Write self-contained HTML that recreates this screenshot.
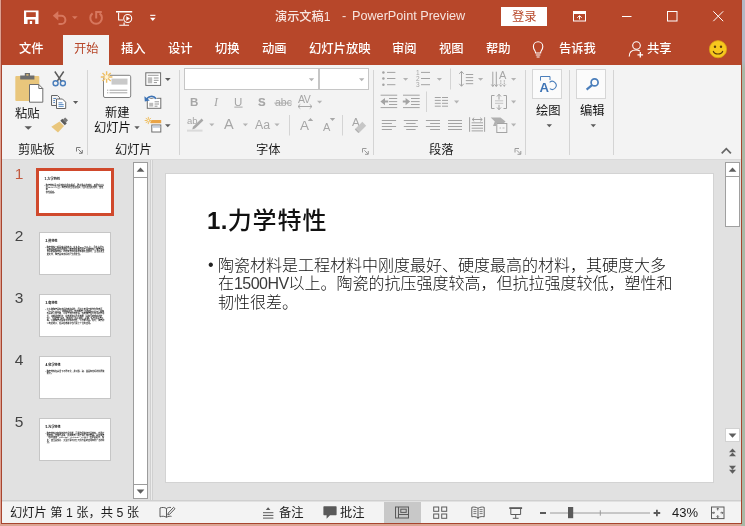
<!DOCTYPE html>
<html lang="zh-CN">
<head>
<meta charset="utf-8">
<title>演示文稿1 - PowerPoint Preview</title>
<style>
html,body{margin:0;padding:0;}
body{width:745px;height:526px;overflow:hidden;position:relative;background:linear-gradient(to bottom,#b4b8c6 0,#b4b8c6 60px,#aab8a6 70px,#aab8a6 100%);
 font-family:"Liberation Sans","Noto Sans CJK SC",sans-serif;font-size:12.3px;color:#141414;}
#win{position:absolute;left:0;top:0;width:742px;height:524px;background:#e1e1e1;overflow:hidden;}
.abs{position:absolute;}
.t,.num,.mini,.bodytxt{will-change:transform;}
.t{position:absolute;white-space:nowrap;line-height:16px;height:16px;}
#titlebar{left:0;top:0;width:742px;height:65px;background:#b7472a;}
.tab{color:#fff;top:41.4px;font-weight:500;}
#ribbon{left:2px;top:65px;width:739px;height:94px;background:#f3f3f3;}
.gl{top:141.7px;color:#1c1c1c;}
.fg{color:#a6a6a6;}
.sep{position:absolute;width:1px;background:#d4d4d4;top:70px;height:85px;}
#status{left:2px;top:502px;width:739px;height:21px;background:#f3f3f3;}
.st{top:505px;color:#1c1c1c;}
.thumb{position:absolute;left:38.5px;width:72.5px;height:43px;background:#fff;border:1px solid #c6c6c6;box-sizing:border-box;overflow:hidden;}
.thumb.sel{left:36px;width:78px;height:48px;border:3px solid #d0492c;}
.mini{position:absolute;left:0;top:2px;width:548px;height:309px;transform-origin:0 0;transform:scale(0.1287);}
.thumb.sel .mini{transform:scale(0.1302);left:0.4px;top:2px;}
.mt{position:absolute;left:43px;top:33px;font-size:24px;font-weight:700;letter-spacing:0.9px;line-height:30px;white-space:nowrap;color:#000;}
.mbul{position:absolute;left:43px;top:83.5px;font-size:16px;line-height:17.5px;color:#000;}
.mb{position:absolute;left:52.5px;top:83.6px;width:452px;font-size:16px;line-height:18.4px;color:#000;font-weight:500;}
.num{position:absolute;font-size:15.5px;color:#444;line-height:16px;width:20px;text-align:center;left:9px;}
</style>
</head>
<body>
<div id="win">
<!-- title + tabs -->
<div id="titlebar" class="abs"></div>
<div class="abs" style="left:63px;top:35px;width:46px;height:31px;background:#f3f3f3;"></div>
<div class="t" style="left:275px;top:8.6px;font-size:12.2px;font-weight:500;color:#f7e4de;">演示文稿1</div><div class="t" style="left:341.5px;top:8.4px;font-size:12.7px;color:#f7e4de;">-</div><div class="t" style="left:352px;top:8.4px;font-size:12.7px;letter-spacing:-0.02px;color:#f7e4de;">PowerPoint Preview</div>
<div class="abs" style="left:500.6px;top:7px;width:46.4px;height:18.8px;background:#fff;"></div>
<div class="t" style="left:511.6px;top:9.2px;font-size:12.3px;color:#b7472a;">登录</div>

<div class="t tab" style="left:18.5px;">文件</div>
<div class="t tab" style="left:73.5px;color:#b7472a;font-weight:400;">开始</div>
<div class="t tab" style="left:120.5px;">插入</div>
<div class="t tab" style="left:167.5px;">设计</div>
<div class="t tab" style="left:214.5px;">切换</div>
<div class="t tab" style="left:261.5px;">动画</div>
<div class="t tab" style="left:308.5px;">幻灯片放映</div>
<div class="t tab" style="left:392px;">审阅</div>
<div class="t tab" style="left:438.5px;">视图</div>
<div class="t tab" style="left:486px;">帮助</div>
<div class="t tab" style="left:558.5px;">告诉我</div>
<div class="t tab" style="left:647px;">共享</div>

<!-- ribbon -->
<div id="ribbon" class="abs"></div>
<div class="sep" style="left:87px;"></div>
<div class="sep" style="left:179px;"></div>
<div class="sep" style="left:373px;"></div>
<div class="sep" style="left:525px;"></div>
<div class="sep" style="left:569px;"></div>
<div class="sep" style="left:613px;"></div>
<div class="t" style="left:14.8px;top:105.6px;">粘贴</div>
<div class="t" style="left:105px;top:104.5px;">新建</div>
<div class="t" style="left:93.6px;top:120px;">幻灯片</div>
<div class="t" style="left:535.5px;top:102.5px;">绘图</div>
<div class="t" style="left:579.5px;top:102.5px;">编辑</div>
<div class="t gl" style="left:17.6px;">剪贴板</div>
<div class="t gl" style="left:114.8px;">幻灯片</div>
<div class="t gl" style="left:256px;">字体</div>
<div class="t gl" style="left:429px;">段落</div>

<!-- font group glyph buttons -->
<div class="t fg" style="left:190.3px;top:93.7px;font-weight:bold;font-size:11.5px;">B</div>
<div class="t fg" style="left:213.6px;top:93.7px;font-style:italic;font-size:12px;font-family:'Liberation Serif',serif;">I</div>
<div class="t fg" style="left:234.3px;top:93.7px;font-size:11.5px;">U</div>
<div class="t fg" style="left:258.3px;top:94.3px;font-weight:bold;font-size:11.5px;color:#dcdcdc;">S</div>
<div class="t fg" style="left:257.5px;top:93.7px;font-weight:bold;font-size:11.5px;">S</div>
<div class="t fg" style="left:275px;top:94px;font-size:10.5px;">abc</div>
<div class="t fg" style="left:297.5px;top:90.8px;font-size:10.5px;letter-spacing:-0.4px;">AV</div>
<div class="t fg" style="left:187px;top:112.5px;font-size:9.5px;">ab</div>
<div class="t fg" style="left:224.2px;top:116.4px;font-size:14.5px;">A</div>
<div class="t fg" style="left:255.3px;top:116.6px;font-size:12.3px;">Aa</div>
<div class="t fg" style="left:300.2px;top:118px;font-size:13.5px;">A</div>
<div class="t fg" style="left:322.8px;top:119.3px;font-size:11px;">A</div>
<div class="t fg" style="left:351.6px;top:114px;font-size:11.5px;">A</div>

<div class="t fg" style="left:415.8px;top:70px;font-size:6.5px;line-height:6.15px;height:auto;white-space:pre;">1
2
3</div>
<div class="t fg" style="left:498.6px;top:67.1px;font-size:11px;">A</div>
<!-- combo boxes -->
<div class="abs" style="left:184px;top:68px;width:135px;height:22px;background:#fff;border:1px solid #c6c6c6;box-sizing:border-box;"></div>
<div class="abs" style="left:319px;top:68px;width:50px;height:22px;background:#fff;border:1px solid #c6c6c6;box-sizing:border-box;"></div>
<div class="abs" style="left:532px;top:69px;width:30px;height:30px;background:#fbfbfb;border:1px solid #d6d6d6;box-sizing:border-box;"></div>
<div class="abs" style="left:576px;top:69px;width:30px;height:30px;background:#fbfbfb;border:1px solid #d6d6d6;box-sizing:border-box;"></div>

<!-- workspace -->
<div class="abs" style="left:2px;top:159px;width:739px;height:1px;background:#dadada;"></div>
<!-- thumbnails -->
<div class="num" style="top:166px;color:#c25a40;">1</div>
<div class="num" style="top:228.3px;">2</div>
<div class="num" style="top:290.3px;">3</div>
<div class="num" style="top:352.3px;">4</div>
<div class="num" style="top:414.3px;">5</div>
<div class="thumb sel" style="top:168px;"><div class="mini"><div class="mt"><span style="font-weight:bold;letter-spacing:0.3px;">1.</span>力学特性</div><div class="mbul">•</div><div class="mb">陶瓷材料是工程材料中刚度最好、硬度最高的材料，其硬度大多<br>在1500HV以上。陶瓷的抗压强度较高，但抗拉强度较低，塑性和<br>韧性很差。</div></div></div>
<div class="thumb" style="top:232px;"><div class="mini"><div class="mt"><span style="font-weight:bold;letter-spacing:0.3px;">2.</span>热特性</div><div class="mbul">•</div><div class="mb">陶瓷材料一般具有高的熔点（大多在2000℃以上），且在高温下具有极好的化学稳定性；陶瓷的导热性低于金属材料，陶瓷还是良好的隔热材料。同时陶瓷的线膨胀系数比金属低，当温度发生变化时，陶瓷具有良好的尺寸稳定性。</div></div></div>
<div class="thumb" style="top:294px;"><div class="mini"><div class="mt"><span style="font-weight:bold;letter-spacing:0.3px;">3.</span>电特性</div><div class="mbul">•</div><div class="mb">大多数陶瓷具有良好的电绝缘性，因此大量用于制作各种电压（1kV～110kV）的绝缘器件。铁电陶瓷（钛酸钡BaTiO3）具有较高的介电常数，可用于制作电容器，铁电陶瓷在外电场的作用下，还能改变形状，将电能转换为机械能（具有压电材料的特性），可用作扩音机、电唱机、超声波仪、声纳、医疗用声谱仪等。少数陶瓷还具有半导体的特性，可作整流器。此外，陶瓷的介电损耗小，在高频电路中也得到了广泛的应用。</div></div></div>
<div class="thumb" style="top:356px;"><div class="mini"><div class="mt"><span style="font-weight:bold;letter-spacing:0.3px;">4.</span>化学特性</div><div class="mbul">•</div><div class="mb">陶瓷材料在高温下不易氧化，并对酸、碱、盐具有良好的抗腐蚀能力。</div></div></div>
<div class="thumb" style="top:418px;"><div class="mini"><div class="mt"><span style="font-weight:bold;letter-spacing:0.3px;">5.</span>光学特性</div><div class="mbul">•</div><div class="mb">陶瓷材料还有独特的光学性能，可用作固体激光器材料、光导纤维材料、光储存器等，透明陶瓷可用于高压钠灯管等。磁性陶瓷（铁氧体如：MgFe2O4、CuFe2O4、Fe3O4）在录音磁带、唱片、变压器铁芯、大型计算机记忆元件方面的应用有着广泛的前途。</div></div></div>
<!-- thumb scrollbar -->
<div class="abs" style="left:133px;top:162px;width:15px;height:337px;background:#fff;border:1px solid #9c9c9c;box-sizing:border-box;"></div>
<div class="abs" style="left:133px;top:177px;width:15px;height:1px;background:#9c9c9c;"></div>
<div class="abs" style="left:133px;top:484px;width:15px;height:1px;background:#9c9c9c;"></div>
<div class="abs" style="left:150px;top:160px;width:3px;height:340px;background:#ececec;border-left:1px solid #d0d0d0;border-right:1px solid #d0d0d0;box-sizing:border-box;"></div>

<!-- slide -->
<div class="abs" style="left:165px;top:173px;width:549px;height:310px;background:#fff;border:1px solid #d3d3d3;box-sizing:border-box;"></div>
<div class="t" style="left:207.4px;top:206px;font-size:24px;font-weight:500;letter-spacing:1px;line-height:30px;height:30px;color:#111;"><span style="font-weight:bold;letter-spacing:0.3px;">1.</span>力学特性</div>
<div class="t" style="left:208px;top:256px;font-size:16px;line-height:18.4px;color:#222;">•</div>
<div class="abs bodytxt" style="left:217.5px;top:256.6px;width:470px;font-size:16px;font-weight:300;line-height:18.4px;color:#111;">陶瓷材料是工程材料中刚度最好、硬度最高的材料，其硬度大多<br>在<span style="letter-spacing:-0.55px;color:#3a3a3a;">1500HV</span>以上。陶瓷的抗压强度较高，但抗拉强度较低，塑性和<br>韧性很差。</div>

<!-- right scrollbar -->
<div class="abs" style="left:725px;top:162px;width:15px;height:65px;background:#fff;border:1px solid #a0a0a0;box-sizing:border-box;"></div>
<div class="abs" style="left:725px;top:176px;width:15px;height:1px;background:#a0a0a0;"></div>
<div class="abs" style="left:725px;top:428px;width:15px;height:14px;background:#fff;border:1px solid #d2d2d2;box-sizing:border-box;"></div>

<!-- status bar -->
<div class="abs" style="left:2px;top:500px;width:739px;height:1px;background:#cfcfcf;"></div>
<div id="status" class="abs"></div>
<div class="abs" style="left:384px;top:502px;width:37px;height:21px;background:#c8c8c8;"></div>
<div class="t st" style="left:10px;">幻灯片 第 1 张，共 5 张</div>
<div class="t st" style="left:278.5px;">备注</div>
<div class="t st" style="left:340px;">批注</div>
<div class="t st" style="left:672px;font-size:13px;">43%</div>

<!-- icons -->
<svg class="abs" style="left:0;top:0;" width="745" height="526" viewBox="0 0 745 526" fill="none">

<!-- QAT -->
<g id="qat">
<rect x="24" y="10.5" width="14.5" height="13.5" fill="#fff"/>
<rect x="26.2" y="12.2" width="9.6" height="4.8" fill="#b7472a"/>
<rect x="27.6" y="19.6" width="7.6" height="4.6" fill="#b7472a"/>
<rect x="29.8" y="21" width="2.3" height="3" fill="#fff"/>
<path d="M55 15.8 H61.3 A4.1 4.1 0 0 1 61.3 24 H58.5" stroke="#d7775e" stroke-width="2" fill="none"/><path d="M52.8 15.8 L58.3 11 V20.6 Z" fill="#d7775e"/>
<path d="M72 16.2 H77.6 L74.8 19.2 Z" fill="#d7775e"/>
<path d="M92.6 13.4 A5.8 5.8 0 1 0 99.6 13.4" stroke="#d7775e" stroke-width="2" fill="none"/>
<path d="M96.2 18.5 V12 H101.8" stroke="#d7775e" stroke-width="2" fill="none"/>
<rect x="116" y="11" width="16.2" height="1.5" fill="#fff"/>
<path d="M118.6 12.5 V20 H123" stroke="#fff" stroke-width="1.1"/>
<circle cx="127.7" cy="18.5" r="4" stroke="#fff" stroke-width="1.1" fill="#b7472a"/>
<path d="M126.3 16.2 L130 18.5 L126.3 20.8 Z" fill="#fff"/>
<path d="M119.3 25.3 H129 M124.1 22.6 V25.3" stroke="#fff" stroke-width="1.1"/>
<rect x="150.2" y="14.8" width="5.2" height="1.1" fill="#fff"/>
<path d="M150 17.8 H155.6 L152.8 20.9 Z" fill="#fff"/>
</g>
<!-- window controls -->
<g stroke="#fff" stroke-width="1" fill="none">
<rect x="573.5" y="11.5" width="12" height="9.5"/>
<path d="M573.5 13 H585.5" stroke-width="2"/><path d="M579.5 19.5 V15.8 M577.3 17.8 L579.5 15.6 L581.7 17.8"/>
<path d="M622 16.5 H631.5"/>
<rect x="667.5" y="11.5" width="9.5" height="9.5"/>
<path d="M713.3 11.3 L723.2 21.2 M723.2 11.3 L713.3 21.2"/>
</g>
<!-- tab row icons -->
<g stroke="#fff" stroke-width="1.1" fill="none">
<path d="M535.6 53 C535.6 50.5 533.4 49.8 533.4 46.4 A4.7 4.7 0 0 1 542.8 46.4 C542.8 49.8 540.6 50.5 540.6 53 Z"/>
<path d="M535.8 55 H540.4 M536.6 57 H539.6"/>
<circle cx="636.5" cy="45.5" r="3.8"/>
<path d="M629.2 56.5 C629.2 51.5 632.5 50 636 50 C638 50 639 50.5 640 51"/>
<path d="M640.3 52 V57.6 M637.5 54.8 H643.1" stroke-width="1.3"/>
</g>
<circle cx="718" cy="49.2" r="8.6" fill="#f7c81e"/>
<circle cx="718" cy="49.2" r="8.6" fill="none" stroke="#d9a514" stroke-width="0.8"/>
<circle cx="715" cy="46.8" r="1.2" fill="#5a3a0a"/>
<circle cx="721" cy="46.8" r="1.2" fill="#5a3a0a"/>
<path d="M713.2 51 C714.5 55 721.5 55 722.8 51" stroke="#5a3a0a" stroke-width="1.2" fill="none"/>

<!-- clipboard group -->
<g id="clip">
<rect x="15.3" y="76" width="24" height="25" rx="1" fill="#e9c67c"/>
<path d="M20.2 79.4 V75.4 H24.8 V73 H30 V75.4 H34.4 V79.4 Z" fill="#6e6e6e"/>
<rect x="26.3" y="74.2" width="2.2" height="1.4" fill="#e9c67c"/>
<path d="M29.5 84.5 H38.8 L42.8 88.5 V102.2 H29.5 Z" fill="#fff" stroke="#6e6e6e" stroke-width="1"/>
<path d="M38.8 84.5 V88.5 H42.8" fill="none" stroke="#6e6e6e" stroke-width="1"/>
<path d="M24.5 126.3 H32 L28.25 129.8 Z" fill="#5c5c5c"/>
<!-- scissors -->
<path d="M54.8 71.5 L61.6 81.6 M63.7 71.5 L56.9 81.6" stroke="#5a5a5a" stroke-width="1.5"/>
<circle cx="55.6" cy="83.3" r="2.5" stroke="#4a7ebb" stroke-width="1.4"/>
<circle cx="62.9" cy="83.3" r="2.5" stroke="#4a7ebb" stroke-width="1.4"/>
<!-- copy -->
<path d="M51.5 95.5 H57.5 L59.5 97.5 V99.5 M51.5 95.5 V105.5 H56" stroke="#666" stroke-width="1"/>
<path d="M56.5 99 H62.5 L65.7 102.2 V108.5 H56.5 Z" fill="#fff" stroke="#666" stroke-width="1"/>
<path d="M58.5 102.8 H62.5 M58.5 104.6 H63.7 M58.5 106.4 H63.7 M53.3 98.5 H56 M53.3 100.5 H55 M53.3 102.5 H55" stroke="#4a7ebb" stroke-width="0.9"/>
<path d="M73 101 H78.2 L75.6 104 Z" fill="#5c5c5c"/>
<!-- format painter -->
<path d="M59.5 121.5 L64 126 L58 132.5 L51.3 126.8 Z" fill="#e9c67c"/>
<path d="M60.3 120.7 L62.3 118.7 L66.8 123.2 L64.8 125.2 Z" fill="#5a5a5a"/>
<path d="M63 119.6 L65.2 117.4 L68 120.2 L65.8 122.4 Z" fill="#777"/>
<!-- dialog launcher -->
<path d="M76.5 151.5 V147.5 H80.5" stroke="#7a7a7a" stroke-width="1"/>
<path d="M78.3 149.3 L82 153 M82.3 150 V153.3 H79" stroke="#7a7a7a" stroke-width="1"/>
</g>

<!-- slides group -->
<g id="slides">
<rect x="103.5" y="75.3" width="27.2" height="22.2" rx="1.5" fill="#fff" stroke="#808080" stroke-width="1"/>
<rect x="111.5" y="78.6" width="16" height="6" fill="#c9c9c9"/>
<path d="M109.5 90.2 H127.3 M109.5 92.8 H127.3" stroke="#9a9a9a" stroke-width="0.9"/>
<path d="M107 90.2 H108.3 M107 92.8 H108.3" stroke="#9a9a9a" stroke-width="0.9"/>
<circle cx="106.6" cy="77" r="3.2" fill="#f3f3f3"/>
<path d="M108.20 77.00 L112.40 77.00 M107.73 78.13 L110.70 81.10 M106.60 78.60 L106.60 82.80 M105.47 78.13 L102.50 81.10 M105.00 77.00 L100.80 77.00 M105.47 75.87 L102.50 72.90 M106.60 75.40 L106.60 71.20 M107.73 75.87 L110.70 72.90 " stroke="#efbf62" stroke-width="1.4"/>
<circle cx="106.6" cy="77" r="1.9" fill="#fdf3d8"/>
<path d="M134.3 126.3 H139.7 L137 129.3 Z" fill="#5c5c5c"/>
<!-- layout -->
<rect x="145.8" y="72.8" width="14.8" height="12.6" fill="#fff" stroke="#6e6e6e" stroke-width="1"/>
<path d="M147.8 75.3 H158.6" stroke="#9a9a9a" stroke-width="1"/>
<rect x="147.8" y="77.3" width="4.4" height="6" fill="#bdbdbd"/>
<path d="M153.8 78 H158.6 M153.8 80.3 H158.6 M153.8 82.6 H157" stroke="#8a8a8a" stroke-width="0.9"/>
<path d="M165 78 H170.6 L167.8 81 Z" fill="#5c5c5c"/>
<!-- reset -->
<rect x="147.3" y="98.3" width="13.5" height="10" fill="#fff" stroke="#6e6e6e" stroke-width="1"/>
<rect x="149.2" y="102.8" width="4" height="3.8" fill="#bdbdbd"/>
<path d="M154.6 101.8 H159 M154.6 104 H159 M154.6 106.2 H157.5" stroke="#8a8a8a" stroke-width="0.9"/>
<path d="M146 100.6 C147.5 95.8 153.5 94.8 156.2 98.8" stroke="#f3f3f3" stroke-width="3.4"/>
<path d="M146.2 100.4 C147.5 96 153.5 95 156 98.8" stroke="#3f74b5" stroke-width="1.7"/>
<path d="M144.4 96.3 L144.8 101.6 L149.8 100.6 Z" fill="#3f74b5"/>
<!-- section -->
<rect x="150.6" y="120" width="10.6" height="3.2" fill="#e9a447"/>
<path d="M149.10 120.50 L151.90 120.50 M148.87 121.07 L150.85 123.05 M148.30 121.30 L148.30 124.10 M147.73 121.07 L145.75 123.05 M147.50 120.50 L144.70 120.50 M147.73 119.93 L145.75 117.95 M148.30 119.70 L148.30 116.90 M148.87 119.93 L150.85 117.95 " stroke="#efbf62" stroke-width="1.0"/>
<rect x="151.8" y="125" width="9" height="7" fill="#fff" stroke="#6e6e6e" stroke-width="1"/>
<rect x="152.4" y="125.6" width="7.8" height="2.2" fill="#c5cfdd"/>
<path d="M165 124.2 H170.6 L167.8 127.2 Z" fill="#5c5c5c"/>
</g>

<!-- font group shapes -->
<g id="fontg" fill="#a8a8a8">
<path d="M308.8 78.3 H314.2 L311.5 81.2 Z" fill="#b4b4b4"/>
<path d="M359 78.3 H364.4 L361.7 81.2 Z" fill="#b4b4b4"/>
<rect x="234.3" y="106.6" width="8.3" height="1"/>
<rect x="274.3" y="102.6" width="17.4" height="0.9"/>
<path d="M298 106.5 H312 M300.3 104.3 L298 106.5 L300.3 108.7 M309.7 104.3 L312 106.5 L309.7 108.7" stroke="#a8a8a8" stroke-width="1" fill="none"/>
<path d="M317 100.8 H322.2 L319.6 103.6 Z" fill="#b4b4b4"/>
<path d="M201.6 118.6 L203.4 120.4 L195 128.6 L192.2 129.4 L193 126.8 Z"/>
<rect x="187" y="129.6" width="15.5" height="2" fill="#dadada"/>
<path d="M209.2 123.4 H214.4 L211.8 126.2 Z" fill="#b4b4b4"/>
<path d="M242.8 123.4 H248 L245.4 126.2 Z" fill="#b4b4b4"/>
<path d="M274.4 123.4 H279.6 L277 126.2 Z" fill="#b4b4b4"/>
<rect x="289" y="115" width="1" height="20.5" fill="#d4d4d4"/>
<rect x="342" y="115" width="1" height="20.5" fill="#d4d4d4"/>
<path d="M307.8 121 H313.2 L310.5 118 Z"/>
<path d="M329.8 118 H335.2 L332.5 121 Z"/>
<path d="M362.3 121.8 L366.2 125.7 L359.7 132.2 L355.8 128.3 Z" fill="#c6c6c6"/>
<path d="M355.8 128.3 L359.7 132.2 L358.3 133 L354.8 129.6 Z" fill="#b0b0b0"/>
<path d="M362.5 152.5 V148.5 H366.5" stroke="#9a9a9a" stroke-width="1" fill="none"/>
<path d="M364.3 150.3 L368 154 M368.3 151 V154.3 H365" stroke="#9a9a9a" stroke-width="1" fill="none"/>
</g>

<!-- paragraph group -->
<g id="para" stroke="#a3a3a3" stroke-width="1" fill="none">
<path d="M387 72.4 H395.4 M421 72.4 H430 M387 78.5 H395.4 M421 78.5 H430 M387 84.7 H395.4 M421 84.7 H430 M380.6 95.2 H397.2 M403 95.2 H419.7 M380.6 107.6 H397.2 M403 107.6 H419.7 M389 98.5 H397.2 M411 98.5 H419.7 M389 101.6 H397.2 M411 101.6 H419.7 M389 104.5 H397.2 M411 104.5 H419.7 M434.8 97.5 H440.8 M442 97.5 H448 M434.8 100.4 H440.8 M442 100.4 H448 M434.8 103.3 H440.8 M442 103.3 H448 M434.8 106.2 H440.8 M442 106.2 H448 M381.8 120.5 H396.1 M403.8 120.5 H417.9 M425.9 120.5 H440 M448 120.5 H462 M381.8 123.5 H391.9 M406.2 123.5 H415.6 M430.1 123.5 H440 M448 123.5 H462 M381.8 126.5 H396.1 M403.8 126.5 H417.9 M425.9 126.5 H440 M448 126.5 H462 M381.8 129.5 H391.9 M406.2 129.5 H415.6 M430.1 129.5 H440 M448 129.5 H462 M465.8 74.5 H473.2 M465.8 77.6 H473.2 M465.8 80.6 H473.2 M465.8 83.7 H473.2 M471.6 122.8 H483 M471.6 125.5 H483 M471.6 128.2 H483 M471.6 130.9 H483 "/>
<g fill="#a3a3a3" stroke="none">
<circle cx="383.4" cy="72.4" r="1.25"/><circle cx="383.4" cy="78.5" r="1.25"/><circle cx="383.4" cy="84.7" r="1.25"/>
<path d="M403 78 H408.2 L405.6 80.8 Z M436.8 78 H442 L439.4 80.8 Z M478 78 H483.2 L480.6 80.8 Z M511 78 H516.2 L513.6 80.8 Z M454 100.6 H459.2 L456.6 103.4 Z M511 100.6 H516.2 L513.6 103.4 Z M511 123.6 H516.2 L513.6 126.4 Z" fill="#b4b4b4"/>
<path d="M380.4 101.6 L385 98 V100.6 H388.2 V102.6 H385 V105.2 Z"/>
<path d="M410.2 101.6 L405.6 98 V100.6 H402.8 V102.6 H405.6 V105.2 Z"/>
<path d="M490.7 117.4 H500.5 L505.5 121.6 L504 123 H496.3 V126 H493 L494.8 121.6 Z" fill="#b0b0b0"/>
</g>
<rect x="450" y="68.5" width="1" height="21" fill="#d4d4d4" stroke="none"/>
<rect x="426" y="91.5" width="1" height="20.5" fill="#d4d4d4" stroke="none"/>
<!-- line spacing arrows -->
<path d="M461.5 71.5 V86 M459.3 73.8 L461.5 71.3 L463.7 73.8 M459.3 83.8 L461.5 86.3 L463.7 83.8"/>
<!-- text direction -->
<path d="M492.8 71.7 V86.3 M496.3 71.7 V86.3 M491.3 84.5 L492.8 86.5 L494.3 84.5 M494.8 84.5 L496.3 86.5 L497.8 84.5"/>
<path d="M500.8 80.3 V86.3 M504.3 80.3 V86.3 M499.3 84.5 L500.8 86.5 L502.3 84.5 M502.8 84.5 L504.3 86.5 L505.8 84.5" stroke-dasharray="1.4 0.8"/>
<!-- align text -->
<path d="M494.5 95.5 H491.5 V108.5 H494.5 M503.5 95.5 H506.5 V108.5 H503.5"/>
<path d="M499 94.3 V99.6 M497 96.5 L499 94.3 L501 96.5 M499 104.8 V109.6 M497 107.5 L499 109.7 L501 107.5"/>
<path d="M495 100.8 H503.2 M495 103.3 H503.2" stroke="#c4c4c4"/>
<!-- distributed -->
<path d="M469.6 117.2 V131.8 M484.6 117.2 V131.8 M472.2 119.5 H482.2 M474.2 117.7 L472.2 119.5 L474.2 121.3 M480.2 117.7 L482.2 119.5 L480.2 121.3"/>
<!-- smartart box -->
<rect x="496.8" y="123.5" width="10" height="9" fill="#f6f6f6"/>
<path d="M499.5 128 H501 M502.5 128 H504.5" stroke="#b8b8b8"/>
<!-- launcher -->
<path d="M515 152.5 V148.5 H519 M516.8 150.3 L520.5 154 M520.8 151 V154.3 H517.5" stroke="#9a9a9a"/>
</g>
<!-- drawing / editing -->
<g id="drawedit">
<path d="M540.5 80.6 V76.5 H550 V80" fill="none" stroke="#4a7ebb" stroke-width="1"/>
<path d="M549.6 82.3 A4 4 0 1 1 549.8 88.6" fill="none" stroke="#4a7ebb" stroke-width="1.1"/>
<text x="539.6" y="91.6" font-family="Liberation Sans, sans-serif" font-weight="bold" font-size="13.2" fill="#3f74b5">A</text>
<circle cx="594.6" cy="82.4" r="3.5" fill="none" stroke="#4a7ebb" stroke-width="1.7"/>
<path d="M592 85.2 L586.6 89.6" stroke="#4a7ebb" stroke-width="2.2"/>
<path d="M546.6 124.2 H552 L549.3 127.2 Z M590.6 124.2 H596 L593.3 127.2 Z" fill="#5c5c5c"/>
<path d="M721.7 153.3 L726.3 148.7 L730.9 153.3" stroke="#666" stroke-width="1.7" fill="none"/>
</g>

<!-- status bar icons -->
<g id="statusicons" stroke="#5a5a5a" stroke-width="1" fill="none">
<path d="M166.5 508.5 C164.5 507.2 162 507.2 160 508 V516.8 C162 516 164.5 516 166.5 517.3 C168.2 516.2 170 516 171.5 516.4 M166.5 508.5 V517.3 M166.5 508.5 C167.8 507.5 169.5 507.2 171 507.5"/>
<path d="M173.6 507.3 L175 508.7 L169.6 514.3 L167.8 514.9 L168.3 513 Z" fill="#f3f3f3"/>
<path d="M265.8 510 H270.4 L268.1 507.3 Z" fill="#5a5a5a" stroke="none"/>
<path d="M263 512.7 H273.4 M263 515.4 H273.4 M263 518.1 H273.4"/>
<path d="M324 506.3 H336 Q336.6 506.3 336.6 507 V514.6 Q336.6 515.3 336 515.3 H330 L326.6 518.8 V515.3 H324 Q323.4 515.3 323.4 514.6 V507 Q323.4 506.3 324 506.3 Z" fill="#595959" stroke="none"/>
<rect x="395.5" y="507" width="13" height="11"/>
<path d="M398.5 507 V518 M398.5 514.5 H408.5"/>
<rect x="400.8" y="509.2" width="5.4" height="3.2"/>
<rect x="433.7" y="507" width="5" height="4.3"/><rect x="441.7" y="507" width="5" height="4.3"/>
<rect x="433.7" y="514" width="5" height="4.3"/><rect x="441.7" y="514" width="5" height="4.3"/>
<path d="M478 508.3 C476 507 473.7 506.8 471.8 507.3 V516.8 C473.7 516.3 476 516.5 478 517.8 C480 516.5 482.3 516.3 484.2 516.8 V507.3 C482.3 506.8 480 507 478 508.3 Z M478 508.3 V519"/>
<path d="M473.4 509.6 H476.4 M473.4 511.6 H476.4 M473.4 513.6 H476.4 M479.6 509.6 H482.6 M479.6 511.6 H482.6 M479.6 513.6 H482.6" stroke-width="0.8"/>
<rect x="509.3" y="507.2" width="12.8" height="1.8" fill="#5a5a5a" stroke="none"/>
<path d="M510.8 509 V514.5 H520.6 V509 M515.7 514.5 V518.3 M512.8 518.3 H518.6"/>
<rect x="540" y="512" width="6" height="2" fill="#5a5a5a" stroke="none"/>
<path d="M550 513 H650" stroke="#9a9a9a"/>
<path d="M600.3 510.3 V515.7" stroke="#9a9a9a"/>
<rect x="568" y="507" width="5.2" height="11.2" fill="#5a5a5a" stroke="none"/>
<path d="M653.6 513 H660.2 M656.9 509.7 V516.3" stroke-width="1.8"/>
<rect x="711.5" y="507" width="12.5" height="11.6"/>
<path d="M717.75 507.8 V510.4 M717.75 515.2 V517.8 M712.3 512.8 H715 M720.5 512.8 H723.2" />
<path d="M716.6 509.2 L717.75 508 L718.9 509.2 M716.6 516.4 L717.75 517.6 L718.9 516.4 M713.6 511.7 L712.5 512.8 L713.6 513.9 M721.9 511.7 L723 512.8 L721.9 513.9" stroke-width="0.8"/>
</g>
<!-- scrollbar arrows -->
<g fill="#5e5e5e">
<path d="M136.6 171.8 H144.4 L140.5 167.6 Z"/>
<path d="M136.6 489.6 H144.4 L140.5 493.8 Z"/>
<path d="M728.6 171.8 H736.4 L732.5 167.6 Z"/>
<path d="M728.6 433.6 H736.4 L732.5 437.8 Z"/>
</g>

<g fill="#5e5e5e">
<path d="M729 452.3 H736 L732.5 448.4 Z M729 456.3 H736 L732.5 452.4 Z"/>
<path d="M729 465.8 H736 L732.5 469.7 Z M729 469.8 H736 L732.5 473.7 Z"/>
</g>
</svg>

<!-- window border -->
<div class="abs" style="left:1px;top:0;width:741px;height:524px;border:1px solid #a8452f;border-top:none;box-sizing:border-box;pointer-events:none;"></div>
</div>
<div class="abs" style="left:0;top:0;width:1px;height:526px;background:#dda090;"></div>
<div class="abs" style="left:0;top:524px;width:741px;height:2px;background:#dba594;"></div>
</body>
</html>
